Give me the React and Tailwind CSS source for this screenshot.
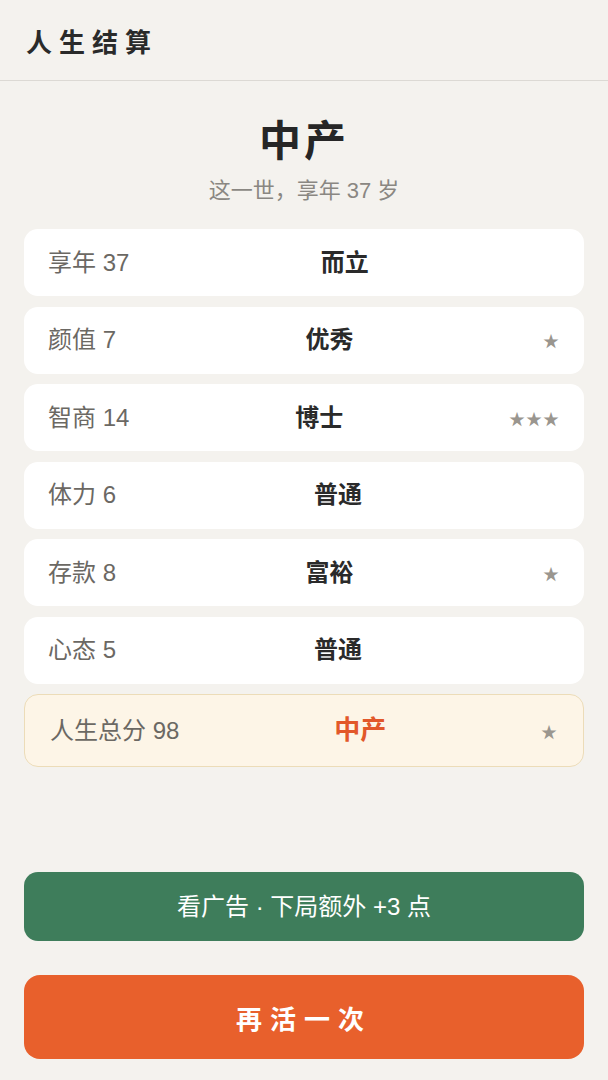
const rows = [
  { label: '享年 37', value: '而立', stars: 0 },
  { label: '颜值 7', value: '优秀', stars: 1 },
  { label: '智商 14', value: '博士', stars: 3 },
  { label: '体力 6', value: '普通', stars: 0 },
  { label: '存款 8', value: '富裕', stars: 1 },
  { label: '心态 5', value: '普通', stars: 0 }
];

const font = { fontFamily: '"Liberation Sans", "Noto Sans CJK SC", sans-serif' };
const cjk = { fontFamily: '"Noto Sans CJK SC", "Liberation Sans", sans-serif' };

const Stars = ({ count }) => (
  <span className="text-[16px] text-[#9a968f] tracking-[1px]" style={cjk}>{'★'.repeat(count)}</span>
);

export default function App() {
  return (
    <div className="flex flex-col h-[1080px] bg-[#f4f2ee] text-[#2b2b2b]" style={font}>
      <header className="flex items-center h-[81px] px-[26px] border-b border-[#dcd9d4]">
        <h1 className="text-[26px] font-bold tracking-[7px] text-[#2a2a2a]" style={cjk}>人生结算</h1>
      </header>

      <div className="flex flex-col items-center pt-[26px]">
        <div className="text-[42px] font-bold leading-[62px] tracking-[3px] text-[#262626]" style={cjk}>中产</div>
        <div className="text-[22px] leading-[34px] mt-[5px] text-[#8a8782]">这一世，享年 37 岁</div>
      </div>

      <div className="flex flex-col gap-[10.5px] px-[24px] mt-[21px]">
        {rows.map(row => (
          <div
            key={row.label}
            className="flex items-center justify-between h-[67px] px-[24px] rounded-[14px] bg-white"
          >
            <span className="text-[24px] text-[#6b6863]">{row.label}</span>
            <span className="text-[24px] font-bold text-[#2a2a2a]">{row.value}</span>
            <Stars count={row.stars} />
          </div>
        ))}
        <div className="flex items-center justify-between h-[73px] px-[25px] rounded-[14px] bg-[#fdf5e7] border border-[#ecdcb8]">
          <span className="text-[24px] text-[#6b6863]">人生总分 98</span>
          <span className="text-[26px] font-bold text-[#e2582a]">中产</span>
          <Stars count={1} />
        </div>
      </div>

      <div className="flex-1" />

      <div className="flex flex-col gap-[34px] px-[24px] pb-[21px]">
        <button className="h-[69px] rounded-[14px] bg-[#3e7d5b] text-white text-[24px]">
          看广告 · 下局额外 +3 点
        </button>
        <button className="h-[84px] rounded-[16px] bg-[#e8602c] text-white text-[26px] font-bold tracking-[8px]" style={cjk}>
          再活一次
        </button>
      </div>
    </div>
  );
}
